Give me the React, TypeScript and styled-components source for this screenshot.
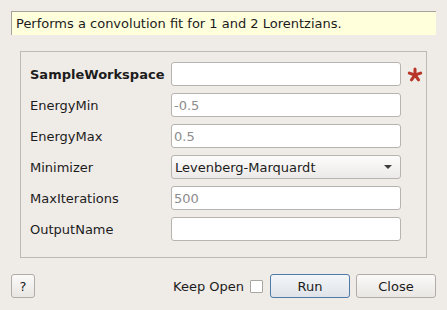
import React from "react";
import styled, { createGlobalStyle } from "styled-components";

const Global = createGlobalStyle`
  html, body { margin: 0; padding: 0; background: #efebe7; }
  body { font-family: "DejaVu Sans", "Liberation Sans", sans-serif; font-size: 13px; color: #1a1a1a; }
  * { box-sizing: border-box; }
`;

const Dialog = styled.div`
  width: 447px;
  height: 310px;
  background: #efebe7;
  padding: 11px 11px 0 11px;
  display: flex;
  flex-direction: column;
`;

const Description = styled.div`
  height: 24px;
  background: #ffffdc;
  border-top: 1px solid #a5a19d;
  border-left: 1px solid #a5a19d;
  padding-left: 4px;
  display: flex;
  align-items: center;
  font-size: 13px;
  color: #1c1c1c;
`;

const Group = styled.div`
  margin: 16px 9px 0 9px;
  height: 207px;
  border: 1px solid #bdb9b5;
  padding: 10px 0 0 9px;
  display: grid;
  grid-template-columns: 141px 230px 22px;
  grid-auto-rows: 24px;
  row-gap: 7px;
  align-items: center;
`;

const Label = styled.div<{ $bold?: boolean }>`
  font-weight: ${(p) => (p.$bold ? "bold" : "normal")};
  color: #1c1c1c;
  white-space: nowrap;
`;

const Field = styled.div`
  height: 24px;
  background: #ffffff;
  border: 1px solid #b7b3af;
  border-radius: 3px;
  padding-left: 2px;
  display: flex;
  align-items: center;
  color: #8c8c8c;
`;

const Combo = styled.div`
  height: 24px;
  background: linear-gradient(#fdfcfc, #eceae8);
  border: 1px solid #b7b3af;
  border-radius: 3px;
  padding: 0 8px 0 3px;
  display: flex;
  align-items: center;
  justify-content: space-between;
  color: #1c1c1c;
`;

const Arrow = styled.span`
  width: 0;
  height: 0;
  border-left: 4px solid transparent;
  border-right: 4px solid transparent;
  border-top: 4px solid #3c3c3c;
`;

const Star = styled.svg`
  margin-left: 6px;
  display: block;
`;

const Footer = styled.div`
  margin-top: 16px;
  display: flex;
  align-items: center;
`;

const Button = styled.button<{ $primary?: boolean; $w: number }>`
  width: ${(p) => p.$w}px;
  height: 24px;
  border: 1px solid ${(p) => (p.$primary ? "#4d7aa8" : "#b0aca8")};
  border-radius: 3px;
  background: ${(p) => (p.$primary ? "linear-gradient(#f4f6f8, #dfe3e8)" : "linear-gradient(#fbfaf9, #e9e6e3)")};
  font-family: "DejaVu Sans", "Liberation Sans", sans-serif;
  font-size: 13px;
  color: #1c1c1c;
  padding: 0;
  margin-left: ${(p) => (p.$primary ? "7px" : "6px")};
`;

const HelpButton = styled(Button)`
  margin-left: 0;
`;

const Spacer = styled.div`
  flex: 1;
`;

const KeepOpen = styled.span`
  color: #1c1c1c;
  margin-right: 6px;
`;

const Check = styled.span`
  width: 13px;
  height: 13px;
  background: #fff;
  border: 1px solid #aaa6a2;
  border-radius: 1px;
`;

const Asterisk = () => (
  <Star width="16" height="15" viewBox="0 0 16 15">
    <g stroke="#b8352a" strokeWidth="3" strokeLinecap="round" transform="translate(8 8)">
      {[0, 72, 144, 216, 288].map((a) => (
        <line key={a} x1="0" y1="0" x2="0" y2="-6" transform={`rotate(${a})`} />
      ))}
    </g>
  </Star>
);

export default function App() {
  return (
    <>
      <Global />
      <Dialog>
        <Description>Performs a convolution fit for 1 and 2 Lorentzians.</Description>
        <Group>
          <Label $bold>SampleWorkspace</Label>
          <Field />
          <Asterisk />
          <Label>EnergyMin</Label>
          <Field>-0.5</Field>
          <span />
          <Label>EnergyMax</Label>
          <Field>0.5</Field>
          <span />
          <Label>Minimizer</Label>
          <Combo>
            <span>Levenberg-Marquardt</span>
            <Arrow />
          </Combo>
          <span />
          <Label>MaxIterations</Label>
          <Field>500</Field>
          <span />
          <Label>OutputName</Label>
          <Field />
          <span />
        </Group>
        <Footer>
          <HelpButton $w={24}>?</HelpButton>
          <Spacer />
          <KeepOpen>Keep Open</KeepOpen>
          <Check />
          <Button $primary $w={80}>Run</Button>
          <Button $w={80}>Close</Button>
        </Footer>
      </Dialog>
    </>
  );
}
